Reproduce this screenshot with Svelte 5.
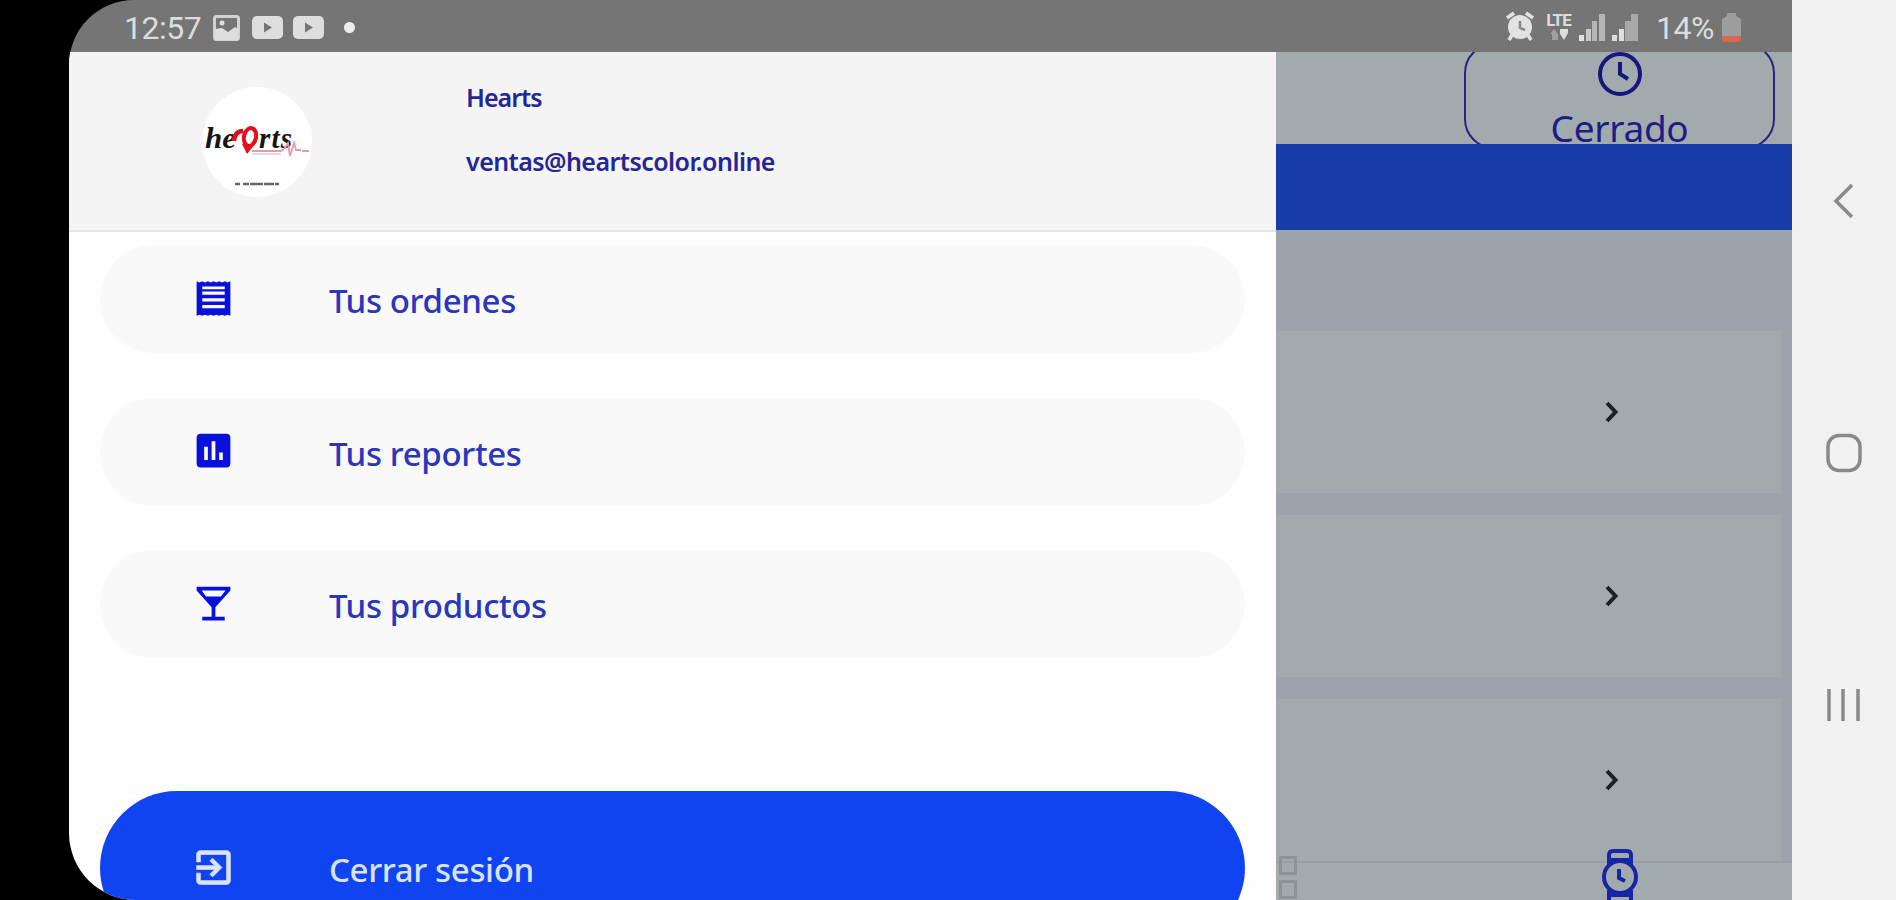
<script>
	const items = [
		{ id: 'orders', label: 'Tus ordenes' },
		{ id: 'reports', label: 'Tus reportes' },
		{ id: 'products', label: 'Tus productos' }
	];

	const cards = [1, 2, 3];

	const icons = {
		orders:
			'M18 17.200H6v-1.800h12v1.800zm0-3.600H6v-1.800h12v1.800zm0-3.600H6V8.200h12V10zM18 7H6V5.600h12V7zM3 21.200l1.500-.6 1.500.6 1.500-.6 1.500.6 1.500-.6 1.500.6 1.500-.6 1.500.6 1.500-.6 1.500.6 1.500-.6 1.500.6V2.800l-1.500.6L18 2.800l-1.500.6L15 2.800l-1.500.6L12 2.800l-1.500.6L9 2.800l-1.500.6L6 2.800l-1.500.6L3 2.800z',
		reports:
			'M19 3H5c-1.100 0-2 .9-2 2v14c0 1.100.9 2 2 2h14c1.100 0 2-.9 2-2V5c0-1.100-.9-2-2-2zM9 17H7v-7h2v7zm4 0h-2V7h2v10zm4 0h-2v-4h2v4z',
		products: 'M21 5V3H3v2l8 9v5H6v2h12v-2h-5v-5l8-9zM8 8.200 5.700 5h12.700l-2.500 3.200H8z',
		logout:
			'M10.090 15.590 11.500 17l5-5-5-5-1.410 1.410L12.670 11H3v2h9.670l-2.580 2.590zM19 3H5c-1.110 0-2 .9-2 2v4h2V5h14v14H5v-4H3v4c0 1.100.89 2 2 2h14c1.100 0 2-.9 2-2V5c0-1.100-.9-2-2-2z'
	};
</script>

<div class="device">
	<div class="screen">
		<header class="status">
			<span class="time">12:57</span>
			<svg class="picture" width="27" height="26" viewBox="0 0 27 26">
				<rect x="1.500" y="1.500" width="24" height="23" rx="2" fill="none" stroke="#d2d2d2" stroke-width="3" />
				<circle cx="9" cy="8" r="2.500" fill="#dedede" />
				<path d="M2 14l7-1 6 4 7-5 3 2v11H2z" fill="#dedede" />
			</svg>
			<svg class="video" width="31" height="23" viewBox="0 0 31 23">
				<rect width="31" height="23" rx="5" fill="#dedede" />
				<path d="M12 6.500v10l8-5z" fill="#757575" />
			</svg>
			<svg class="video" width="31" height="23" viewBox="0 0 31 23">
				<rect width="31" height="23" rx="5" fill="#dedede" />
				<path d="M12 6.500v10l8-5z" fill="#757575" />
			</svg>
			<span class="dot"></span>

			<div class="status-right">
				<svg class="alarm" width="30" height="30" viewBox="0 0 30 30">
					<circle cx="15" cy="16" r="12" fill="#e2e2e2" />
					<path d="M2 7l7-5M28 7l-7-5M7 24l-3 5M23 24l3 5" stroke="#e2e2e2" stroke-width="3.500" />
					<path d="M15 10v7l5 2" fill="none" stroke="#8a8a8a" stroke-width="2.500" />
				</svg>
				<div class="lte">
					<span>LTE</span>
					<svg width="18" height="11" viewBox="0 0 18 11">
						<path d="M4 0l4 5v6H2V5H0z" fill="#a0a0a0" />
						<path d="M10 0h8v4l-4 7-4-6z" fill="#dedede" />
					</svg>
				</div>
				<svg class="signal" width="27" height="27" viewBox="0 0 27 27">
					<path d="M0 21h5v6H0z" fill="#e2e2e2" />
					<path d="M7 15h5v12H7z" fill="#c9c9c9" />
					<path d="M13 7h5v20h-5zM20 0h6v27h-6z" fill="#b5b5b5" />
				</svg>
				<svg class="signal" width="27" height="27" viewBox="0 0 27 27">
					<path d="M0 21h5v6H0zM7 15h5v12H7z" fill="#dedede" />
					<path d="M13 7h6v20h-6zM19 0h7v27h-7z" fill="#a8a8a8" />
				</svg>
				<span class="percent">14%</span>
				<svg width="19" height="29" viewBox="0 0 19 29">
					<path d="M5 3V0h9v3l5 3v17H0V6z" fill="#9d9d9d" />
					<path d="M0 23h19v3q0 3-3 3H3q-3 0-3-3z" fill="#d9684c" />
				</svg>
			</div>
		</header>

		<div class="content">
			<aside class="drawer">
				<div class="profile">
					<svg class="avatar" width="110" height="110" viewBox="0 0 110 110">
						<circle cx="55" cy="55" r="55" fill="#fff" />
						<text class="brand" x="3" y="61" textLength="31" lengthAdjust="spacingAndGlyphs">he</text>
						<path d="M32 54q1-10 9-10" fill="none" stroke="#e3101c" stroke-width="4.500" />
						<ellipse
							cx="48"
							cy="50"
							rx="6"
							ry="9"
							transform="rotate(12 48 50)"
							fill="none"
							stroke="#e3101c"
							stroke-width="4"
						/>
						<path d="M40 57l13 0-8 10z" fill="#e3101c" />
						<text class="brand" x="57" y="61" textLength="33" lengthAdjust="spacing">rts</text>
						<path
							d="M50 64h29l4-3 3-5 2 13 4-13 2 7h5M100 64h7"
							fill="none"
							stroke="#e79aa6"
							stroke-width="1.800"
						/>
						<path d="M50 67h29" stroke="#bbb" stroke-width="1" />
						<path d="M33 97h44" stroke="#666" stroke-width="2.500" stroke-dasharray="5 3 6 1 13 1 10 1" />
					</svg>
					<div class="who">
						<span class="name">Hearts</span>
						<span class="mail">ventas@heartscolor.online</span>
					</div>
				</div>

				<nav class="menu">
					{#each items as item (item.id)}
						<button class="item" type="button">
							<svg class="icon" viewBox="0 0 24 24"><path d={icons[item.id]} /></svg>
							<span class="label">{item.label}</span>
						</button>
					{/each}
				</nav>

				<button class="item logout" type="button">
					<svg class="icon" viewBox="0 0 24 24"><path d={icons.logout} /></svg>
					<span class="label">Cerrar sesión</span>
				</button>
			</aside>

			<!-- dimmed page behind the drawer -->
			<main class="page">
				<section class="top">
					<div class="state">
						<svg width="46" height="46" viewBox="0 0 46 46">
							<circle cx="23" cy="23" r="20" />
							<path d="M23 11v12l8 5" />
						</svg>
						<span>Cerrado</span>
					</div>
				</section>
				<div class="band"></div>

				<div class="cards">
					{#each cards as card (card)}
						<div class="card">
							<svg width="17" height="24" viewBox="0 0 17 24"><path d="M3 3l8.500 9L3 21" /></svg>
						</div>
					{/each}
				</div>

				<footer class="tabs">
					<div class="grid-icon"><i></i><i></i></div>
					<svg class="watch" width="38" height="56" viewBox="0 0 38 56">
						<path d="M8 16V6q0-4 4-4h14q4 0 4 4v10M9 11h20M8 41v9q0 4 4 4h14q4 0 4-4v-9M9 46h20" />
						<circle cx="19" cy="28" r="16" />
						<path d="M18 20v9l6 3" />
					</svg>
				</footer>
			</main>
		</div>
	</div>

	<div class="navbar">
		<svg class="back" width="22" height="36" viewBox="0 0 22 36"><path d="M19 2L3 18l16 16" /></svg>
		<svg class="home" width="38" height="40" viewBox="0 0 38 40">
			<rect x="3" y="2.500" width="32" height="35" rx="11" />
		</svg>
		<svg class="recents" width="36" height="32" viewBox="0 0 36 32"><path d="M3 0v32M17 0v32M32 0v32" /></svg>
	</div>
</div>

<style>
	:global(body) {
		background: #000;
		overflow: hidden;
	}

	.device {
		display: flex;
		width: 1896px;
		height: 900px;
		padding-left: 69px;
		box-sizing: border-box;
		background: #000;
		font-family: 'Noto Sans', 'Open Sans', sans-serif;
		overflow: hidden;
	}

	.screen {
		flex: 1;
		display: flex;
		flex-direction: column;
		border-radius: 65px 0 0 67px;
		overflow: hidden;
	}

	svg {
		display: block;
		flex-shrink: 0;
	}

	/* status bar */
	.status {
		display: flex;
		align-items: center;
		height: 52px;
		flex-shrink: 0;
		padding: 3px 51px 0 55px;
		box-sizing: border-box;
		background: #757575;
		color: #dcdcdc;
		font-family: Roboto, sans-serif;
		font-size: 32px;
	}

	.time {
		width: 89px;
		letter-spacing: -0.5px;
	}

	.video {
		margin-left: 12px;
	}

	.video + .video {
		margin-left: 10px;
	}

	.dot {
		width: 11px;
		height: 11px;
		margin-left: 20px;
		border-radius: 50%;
		background: #eee;
	}

	.status-right {
		display: flex;
		align-items: center;
		margin-left: auto;
	}

	.alarm {
		margin-top: -3px;
	}

	.lte {
		display: flex;
		flex-direction: column;
		align-items: center;
		width: 27px;
		margin: -4px 7px 0 10px;
		font-size: 17px;
		font-weight: 700;
		line-height: 18px;
		letter-spacing: -1px;
	}

	.signal {
		margin-right: 6px;
	}

	.percent {
		width: 66px;
		margin-left: 11px;
		letter-spacing: -0.5px;
	}

	.content {
		flex: 1;
		display: flex;
		min-height: 0;
	}

	/* drawer */
	.drawer {
		width: 1207px;
		flex-shrink: 0;
		background: #fefefe;
		overflow: hidden;
	}

	.profile {
		display: flex;
		height: 180px;
		padding: 35px 0 0 133px;
		box-sizing: border-box;
		background: #f4f4f4;
		border-bottom: 2px solid #e4e4e4;
	}

	.brand {
		font-family: 'Liberation Serif', serif;
		font-size: 29px;
		font-style: italic;
		font-weight: 700;
		fill: #151515;
	}

	.who {
		display: flex;
		flex-direction: column;
		gap: 28px;
		margin-left: 154px;
		color: #25259a;
		font-size: 25px;
		font-weight: 600;
		line-height: 36px;
	}

	.name {
		margin-top: -8px;
		letter-spacing: -1px;
	}

	.mail {
		letter-spacing: -0.55px;
	}

	.menu {
		display: flex;
		flex-direction: column;
		gap: 44.500px;
		padding: 13px 31px 0;
	}

	.item {
		display: flex;
		align-items: center;
		width: 100%;
		height: 108px;
		padding: 0 0 2px 91px;
		border: none;
		border-radius: 54px;
		background: #f9f9f9;
		color: #2a36bd;
		font-family: inherit;
		font-size: 33px;
		font-weight: 500;
		letter-spacing: -0.35px;
		text-align: left;
	}

	.icon {
		width: 45px;
		height: 45px;
		fill: #0a10dc;
	}

	.label {
		margin-left: 93px;
		padding-top: 5px;
		white-space: nowrap;
	}

	.logout {
		width: 1145px;
		height: 154px;
		margin: 133px 0 0 31px;
		border-radius: 77px;
		background: #1044f1;
		color: #d9e2ff;
	}

	.logout .icon {
		fill: #dbe3ff;
		stroke: #dbe3ff;
		stroke-width: 0.4;
	}

	/* page */
	.page {
		flex: 1;
		display: flex;
		flex-direction: column;
		background: #9ba3ab;
		overflow: hidden;
	}

	.top {
		display: flex;
		justify-content: flex-end;
		height: 92px;
		flex-shrink: 0;
		padding-right: 17px;
		background: #a1aaac;
		overflow: hidden;
	}

	.state {
		display: flex;
		flex-direction: column;
		align-items: center;
		width: 311px;
		height: 106px;
		margin-top: -9px;
		padding-top: 6px;
		box-sizing: border-box;
		border: 2px solid #25277f;
		border-radius: 30px;
		color: #1c1c87;
		font-size: 37px;
		line-height: 46px;
	}

	.state span {
		margin-top: 8px;
		letter-spacing: -0.3px;
	}

	.state svg,
	.watch {
		fill: none;
		stroke: #16167f;
		stroke-width: 4;
	}

	.band {
		height: 86px;
		flex-shrink: 0;
		background: #163da8;
	}

	.cards {
		display: flex;
		flex-direction: column;
		gap: 22px;
		padding: 101px 11px 0 0;
	}

	.card {
		display: flex;
		align-items: center;
		justify-content: flex-end;
		height: 162px;
		padding-right: 160px;
		box-sizing: border-box;
		background: #a1aaac;
	}

	.card path {
		fill: none;
		stroke: #1b2022;
		stroke-width: 4;
	}

	.tabs {
		display: flex;
		flex: 1;
		align-items: flex-start;
		background: #a1aaac;
		border-top: 2px solid #979fa2;
	}

	.grid-icon {
		display: flex;
		flex-direction: column;
		gap: 5px;
		margin: -7px 0 0 3px;
	}

	.grid-icon i {
		width: 18px;
		height: 19px;
		box-sizing: border-box;
		border: 3px solid #8b9396;
	}

	.watch {
		margin: -14px 0 0 304px;
		stroke: #1724a6;
	}

	/* system navigation */
	.navbar {
		display: flex;
		flex-direction: column;
		align-items: center;
		width: 104px;
		flex-shrink: 0;
		padding-top: 183px;
		box-sizing: border-box;
		background: #f1f1f1;
	}

	.navbar svg {
		fill: none;
		stroke: #898989;
		stroke-width: 3.500;
	}

	.home {
		margin-top: 214px;
	}

	.recents {
		margin-top: 216px;
	}
</style>
